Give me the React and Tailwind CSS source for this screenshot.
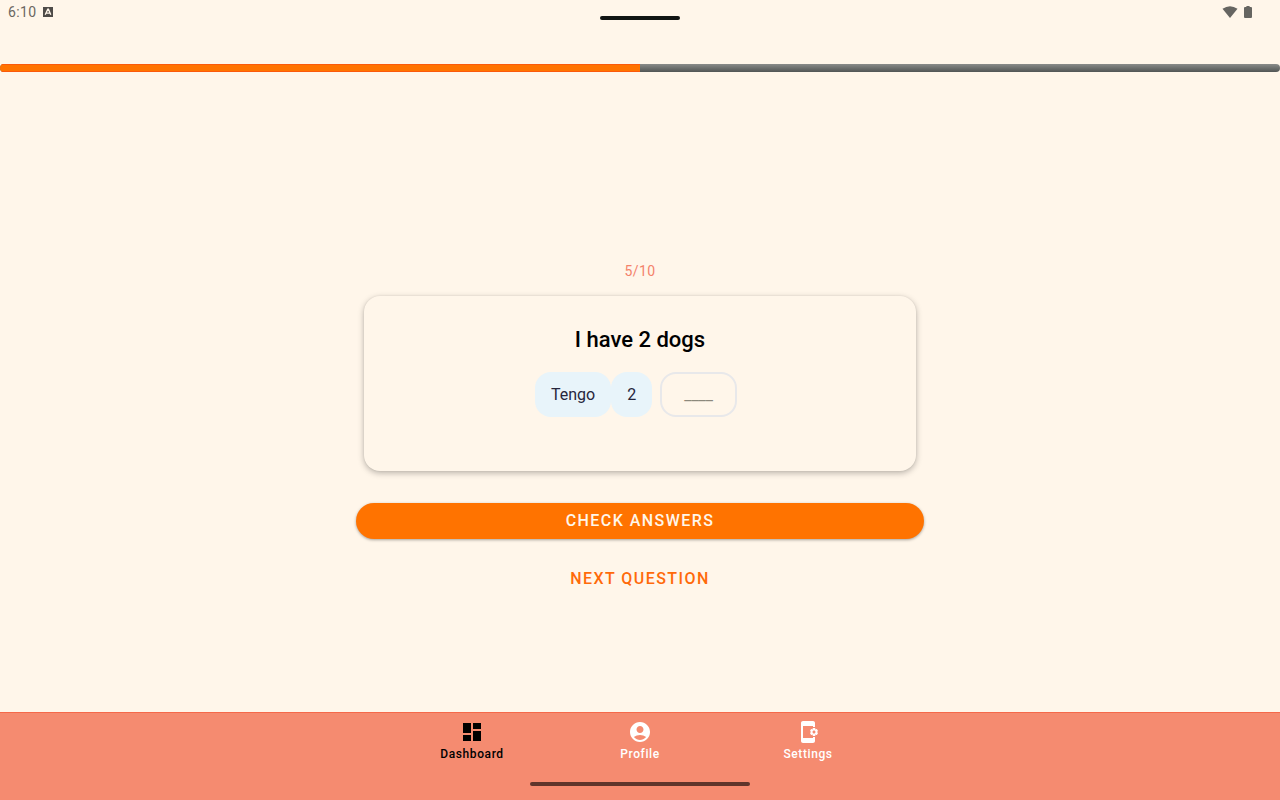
import { MdDashboard, MdAccountCircle, MdAppSettingsAlt } from "react-icons/md";

const tabs = [
  { label: "Dashboard", Icon: MdDashboard, active: true },
  { label: "Profile", Icon: MdAccountCircle },
  { label: "Settings", Icon: MdAppSettingsAlt },
];

function StatusBar() {
  return (
    <header className="relative flex h-6 items-center justify-between pl-2 pr-7 text-[#6b6761]">
      <div className="flex items-center gap-[7px]">
        <span className="text-sm tracking-wide">6:10</span>
        <svg className="size-[10px]" viewBox="0 0 9 9" aria-hidden="true">
          <rect width="9" height="9" fill="#4e4b48" />
          <path d="M2 7 4.3 2h.6L7 7M3 5.5h3" fill="none" stroke="#fff6ea" strokeWidth="1.2" />
        </svg>
      </div>
      <div className="flex items-center gap-1.5">
        <svg className="h-3 w-4" viewBox="0 0 16 12" aria-hidden="true">
          <path d="M.5 2.8Q8-2.4 15.5 2.8L8 12Z" fill="#666561" />
        </svg>
        <svg className="h-3 w-2" viewBox="0 0 8 12" aria-hidden="true">
          <path d="M2.4 0h3.2v1H7q1 0 1 1v9q0 1-1 1H1q-1 0-1-1V2q0-1 1-1h1.4Z" fill="#666561" />
        </svg>
      </div>
      <div className="absolute left-1/2 top-4 h-1 w-20 -translate-x-1/2 rounded-sm bg-[#111513]" />
    </header>
  );
}

function Progress({ value, total }) {
  return (
    <div
      role="progressbar"
      aria-label="Quiz progress"
      aria-valuenow={value}
      aria-valuemax={total}
      className="mt-10 h-2 overflow-hidden rounded-full bg-linear-to-b from-[#8a8c8a] to-[#525655]"
    >
      <div
        className="h-full border-y border-[#fb5a0c] bg-[#ff7300]"
        style={{ width: `${(value / total) * 100}%` }}
      />
    </div>
  );
}

export default function App() {
  return (
    <div className="flex min-h-screen flex-col bg-[#fff6ea] font-['Roboto',sans-serif]">
      <StatusBar />
      <Progress value={5} total={10} />

      <main className="mx-auto flex w-full max-w-[568px] grow flex-col items-center justify-center pt-[74px]">
        <p className="text-sm tracking-wide text-[#f4826a]">5/10</p>

        <section className="mt-[15px] w-[calc(100%-16px)] rounded-2xl px-4 pb-[54px] pt-7 shadow-[0_2px_6px_rgba(0,0,0,0.28),0_0_2px_rgba(0,0,0,0.08)]">
          <h1 className="text-center text-[22px] font-medium leading-8 text-black">I have 2 dogs</h1>
          <div className="mt-4 flex justify-center pr-2 text-base leading-[25px] text-[#26263c]">
            <span className="rounded-2xl bg-[#e8f4fa] px-4 py-[10px]">Tengo</span>
            <span className="rounded-2xl bg-[#e8f4fa] px-4 py-[10px]">2</span>
            <button
              type="button"
              aria-label="Missing word"
              className="ml-2 rounded-2xl border-2 border-[#e8e8ea] px-[22px] py-2 text-[#8c887c]"
            >
              ____
            </button>
          </div>
        </section>

        <button
          type="button"
          className="mt-8 h-9 w-full rounded-full bg-[#ff7300] text-base font-medium tracking-[0.09em] text-[#fff6ea] shadow-[0_1px_3px_rgba(0,0,0,0.35)]"
        >
          CHECK ANSWERS
        </button>
        <button
          type="button"
          className="mt-[22px] h-9 w-full rounded-full text-base font-medium tracking-[0.09em] text-[#ff6a0a]"
        >
          NEXT QUESTION
        </button>
      </main>

      <nav className="relative flex h-22 justify-center border-t border-[#f5694a] bg-[#f58b70] pt-[7px]">
        {tabs.map(({ label, Icon, active }) => (
          <a
            key={label}
            href={`#${label.toLowerCase()}`}
            aria-current={active ? "page" : undefined}
            className={`flex w-[168px] flex-col items-center text-xs font-medium tracking-wider ${
              active ? "text-black" : "text-white"
            }`}
          >
            <Icon className="size-6" aria-hidden="true" />
            <span className="mt-0.5">{label}</span>
          </a>
        ))}
        <div className="absolute bottom-3.5 left-1/2 h-1 w-[220px] -translate-x-1/2 rounded-full bg-[#5f352b]" />
      </nav>
    </div>
  );
}
